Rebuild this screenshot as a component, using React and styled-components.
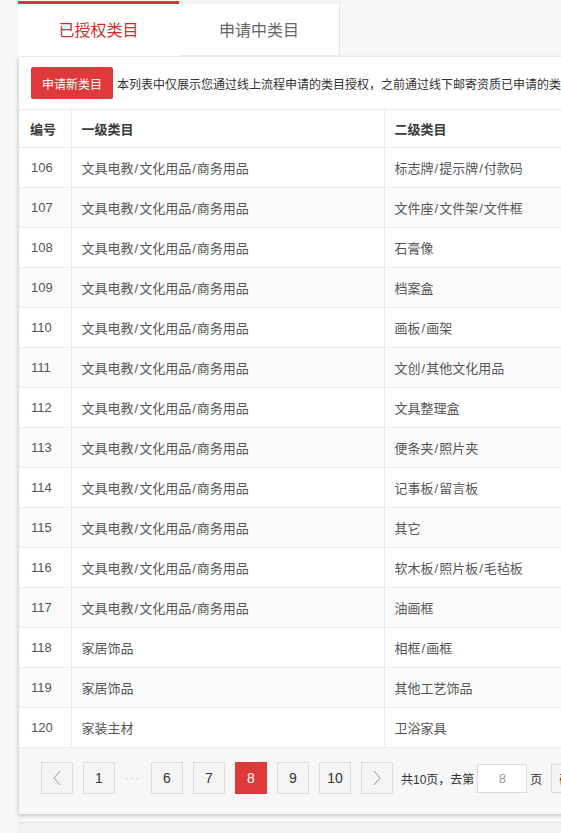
import React from 'react';
import styled, { createGlobalStyle } from 'styled-components';

const GlobalStyle = createGlobalStyle`
    html, body {
        margin: 0;
        padding: 0;
        background: #f7f7f7;
        overflow: hidden;
    }
    body {
        font-family: "Liberation Sans", "Noto Sans CJK SC", sans-serif;
        color: #333;
    }
`;

const Page = styled.div`
    width: 561px;
    overflow: hidden;
    padding-top: 1px;
`;

const Wrap = styled.div`
    margin-left: 18px;
    width: 960px;
`;

const Tabs = styled.div`
    display: flex;
    height: 55px;
`;

const Tab = styled.div`
    width: 161px;
    box-sizing: border-box;
    display: flex;
    align-items: center;
    justify-content: center;
    font-size: 16px;
    background: #fff;
    color: ${p => p.active ? '#c9302c' : '#666'};
    border-top: 3px solid ${p => p.active ? '#d13a3a' : '#f3f3f3'};
    border-right: ${p => p.active ? 'none' : '1px solid #e6e6e6'};
    border-bottom: ${p => p.active ? 'none' : '1px solid #ececec'};
    padding-bottom: 2px;
`;

const Panel = styled.div`
    background: #fff;
    border-top: 1px solid #ececec;
    box-shadow: -1px 2px 4px rgba(0, 0, 0, 0.18);
    margin-left: 1px;
`;

const Toolbar = styled.div`
    display: flex;
    align-items: center;
    padding: 10px 12px 10px;
    gap: 4px;
`;

const RedButton = styled.button`
    height: 32px;
    width: 82px;
    border: none;
    border-radius: 2px;
    background: #e0393b;
    color: #fff;
    font-family: inherit;
    font-size: 12px;
    padding: 0;
`;

const Note = styled.span`
    font-size: 12px;
    color: #333;
    white-space: nowrap;
`;

const Table = styled.table`
    width: 100%;
    border-collapse: collapse;
    table-layout: fixed;
`;

const Th = styled.th`
    box-sizing: border-box;
    height: 38px;
    text-align: left;
    font-size: 13px;
    font-weight: 600;
    color: #3a3a3a;
    padding: 0 0 0 ${p => p.first ? 11 : 10}px;
    border-top: 1px solid #ececec;
    border-bottom: 1px solid #ececec;
    border-right: 1px solid #ececec;
    width: ${p => p.w ? `${p.w}px` : 'auto'};
`;

const Row = styled.tr`
    background: ${p => p.striped ? '#fafafa' : '#fff'};
`;

const Td = styled.td`
    height: 39px;
    font-size: 13px;
    color: #555;
    padding: 0 0 0 ${p => p.first ? 12 : 10}px;
    border-bottom: 1px solid #ececec;
    border-right: 1px solid #ececec;
    white-space: nowrap;
    overflow: hidden;
`;

const Slash = styled.span`
    margin: 0 1px;
`;

const Pager = styled.div`
    display: flex;
    align-items: center;
    background: #f7f7f7;
    padding: 14px 0 20px 22px;
`;

const PageBtn = styled.div`
    width: 32px;
    height: 32px;
    box-sizing: border-box;
    display: flex;
    align-items: center;
    justify-content: center;
    margin-right: 10px;
    font-size: 14px;
    color: ${p => p.active ? '#fff' : '#333'};
    background: ${p => p.active ? '#e0393b' : '#f4f4f4'};
    border: 1px solid ${p => p.active ? '#e0393b' : '#dcdcdc'};
`;

const Dots = styled.span`
    width: 16px;
    margin-right: 10px;
    color: #c8c8c8;
    font-size: 12px;
    letter-spacing: 1px;
`;

const PagerText = styled.span`
    font-size: 12px;
    color: #333;
    margin-left: ${p => p.ml || 0}px;
    white-space: nowrap;
`;

const PageInput = styled.div`
    width: 50px;
    height: 29px;
    box-sizing: border-box;
    margin: 0 3px 0 3px;
    background: #fff;
    border: 1px solid #dcdcdc;
    display: flex;
    align-items: center;
    justify-content: center;
    font-size: 13px;
    color: #999;
`;

const GoBtn = styled.div`
    margin-left: 9px;
    height: 29px;
    width: 40px;
    box-sizing: border-box;
    border: 1px solid #dcdcdc;
    background: #f4f4f4;
    font-size: 12px;
    display: flex;
    align-items: center;
    justify-content: center;
`;

const Bottom = styled.div`
    margin-top: 8px;
    height: 20px;
    border-top: 1px solid #e2e2e2;
    background: #f2f2f2;
`;

const Chevron = ({ dir }) => (
    <svg width="8" height="16" viewBox="0 0 8 16">
        <polyline
            points={dir === 'left' ? '7,1 1,8 7,15' : '1,1 7,8 1,15'}
            fill="none"
            stroke="#999"
            strokeWidth="1"
        />
    </svg>
);

// category paths get a hair of space round each slash
const Path = ({ text }) => {
    const parts = text.split('/');
    return parts.map((part, i) => (
        <React.Fragment key={i}>
            {i > 0 && <Slash>/</Slash>}
            {part}
        </React.Fragment>
    ));
};

const STATIONERY = '文具电教/文化用品/商务用品';

const rows = [
    [106, STATIONERY, '标志牌/提示牌/付款码'],
    [107, STATIONERY, '文件座/文件架/文件框'],
    [108, STATIONERY, '石膏像'],
    [109, STATIONERY, '档案盒'],
    [110, STATIONERY, '画板/画架'],
    [111, STATIONERY, '文创/其他文化用品'],
    [112, STATIONERY, '文具整理盒'],
    [113, STATIONERY, '便条夹/照片夹'],
    [114, STATIONERY, '记事板/留言板'],
    [115, STATIONERY, '其它'],
    [116, STATIONERY, '软木板/照片板/毛毡板'],
    [117, STATIONERY, '油画框'],
    [118, '家居饰品', '相框/画框'],
    [119, '家居饰品', '其他工艺饰品'],
    [120, '家装主材', '卫浴家具'],
];

const App = () => {
    return (
        <Page>
            <GlobalStyle />
            <Wrap>
                <Tabs>
                    <Tab active>已授权类目</Tab>
                    <Tab>申请中类目</Tab>
                </Tabs>
                <Panel>
                    <Toolbar>
                        <RedButton>申请新类目</RedButton>
                        <Note>本列表中仅展示您通过线上流程申请的类目授权，之前通过线下邮寄资质已申请的类目授权请在类目管理中查看</Note>
                    </Toolbar>
                    <Table>
                        <thead>
                            <tr>
                                <Th w={52} first>编号</Th>
                                <Th w={313}>一级类目</Th>
                                <Th w={313}>二级类目</Th>
                                <Th>状态</Th>
                            </tr>
                        </thead>
                        <tbody>
                            {rows.map((r, i) => (
                                <Row key={r[0]} striped={i % 2 === 1}>
                                    <Td first>{r[0]}</Td>
                                    <Td><Path text={r[1]} /></Td>
                                    <Td><Path text={r[2]} /></Td>
                                    <Td>已授权</Td>
                                </Row>
                            ))}
                        </tbody>
                    </Table>
                    <Pager>
                        <PageBtn><Chevron dir="left" /></PageBtn>
                        <PageBtn>1</PageBtn>
                        <Dots>···</Dots>
                        <PageBtn>6</PageBtn>
                        <PageBtn>7</PageBtn>
                        <PageBtn active>8</PageBtn>
                        <PageBtn>9</PageBtn>
                        <PageBtn>10</PageBtn>
                        <PageBtn><Chevron dir="right" /></PageBtn>
                        <PagerText ml={-2}>共10页，去第</PagerText>
                        <PageInput>8</PageInput>
                        <PagerText>页</PagerText>
                        <GoBtn>确定</GoBtn>
                    </Pager>
                </Panel>
                <Bottom />
            </Wrap>
        </Page>
    );
};

export default App;
